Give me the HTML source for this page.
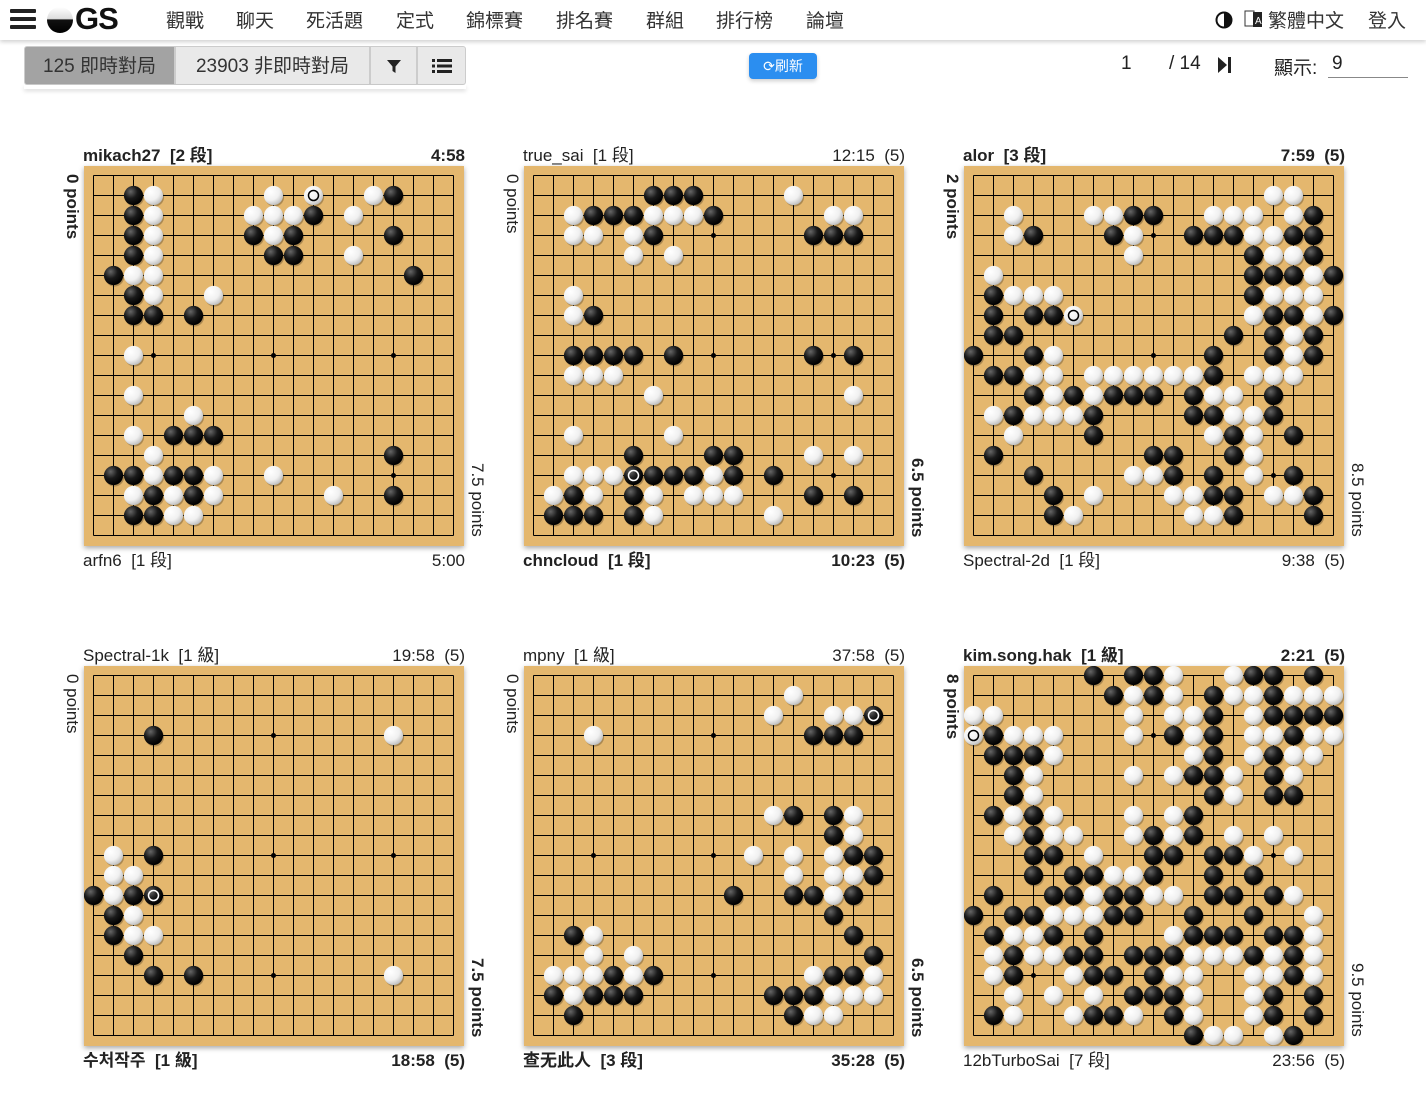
<!DOCTYPE html>
<html><head><meta charset="utf-8">
<style>
*{margin:0;padding:0;box-sizing:border-box}
body{width:1426px;height:1110px;background:#fff;font-family:"Liberation Sans","Noto Sans CJK TC",sans-serif;color:#222;position:relative;overflow:hidden}
.abs{position:absolute;white-space:nowrap}
.nav{position:absolute;left:0;top:0;width:1426px;height:40px;background:#fff;box-shadow:0 2px 4px rgba(0,0,0,.18)}
.nv{position:absolute;top:6px;font-size:19px;color:#333}
.bg{position:absolute;top:46px;height:39px;font-size:19px;line-height:39px;border:1px solid #ccc;text-align:center;color:#333}
.lbl{position:absolute;font-size:17px;line-height:20px;height:20px;color:#222;white-space:nowrap}
.b{font-weight:bold}
.side{position:absolute;font-size:17px;line-height:20px;writing-mode:vertical-rl;white-space:nowrap;color:#222}
.board{position:absolute;width:380px;height:380px;box-shadow:0 2px 5px rgba(0,0,0,.35)}
</style></head><body>
<div class="nav">
  <div class="abs" style="left:10px;top:9px;width:26px;height:4px;background:#222;border-radius:1px"></div>
  <div class="abs" style="left:10px;top:17px;width:26px;height:4px;background:#222;border-radius:1px"></div>
  <div class="abs" style="left:10px;top:25px;width:26px;height:4px;background:#222;border-radius:1px"></div>
  <svg class="abs" style="left:46px;top:6px" width="28" height="28"><defs><linearGradient id="lg" x1="0" y1="0" x2="0" y2="1"><stop offset="0" stop-color="#fff"/><stop offset=".45" stop-color="#ddd"/><stop offset=".5" stop-color="#111"/><stop offset="1" stop-color="#000"/></linearGradient></defs><circle cx="14" cy="14" r="13" fill="url(#lg)"/></svg>
  <div class="abs" style="left:75px;top:1px;font-size:31px;font-weight:bold;color:#111;letter-spacing:-1px">GS</div>
  <div class="nv" style="left:166px">觀戰</div>
  <div class="nv" style="left:236px">聊天</div>
  <div class="nv" style="left:306px">死活題</div>
  <div class="nv" style="left:396px">定式</div>
  <div class="nv" style="left:466px">錦標賽</div>
  <div class="nv" style="left:556px">排名賽</div>
  <div class="nv" style="left:646px">群組</div>
  <div class="nv" style="left:716px">排行榜</div>
  <div class="nv" style="left:806px">論壇</div>
  <svg class="abs" style="left:1215px;top:11px" width="18" height="18"><circle cx="9" cy="9" r="7.5" fill="none" stroke="#111" stroke-width="2"/><path d="M9 1.5A7.5 7.5 0 0 1 9 16.5Z" fill="#111"/></svg>
  <svg class="abs" style="left:1244px;top:9px" width="20" height="20"><rect x="1" y="2" width="9" height="15" fill="#fff" stroke="#333"/><rect x="9" y="3" width="9" height="15" fill="#222"/><text x="11" y="15" font-size="10" fill="#fff" font-family="Liberation Sans">A</text></svg>
  <div class="nv" style="left:1268px">繁體中文</div>
  <div class="nv" style="left:1368px">登入</div>
</div>
<div class="bg" style="left:24px;width:151px;background:#a3a3a3;border-radius:3px 0 0 3px">125 即時對局</div>
<div class="bg" style="left:175px;width:195px;background:#e9e9e9">23903 非即時對局</div>
<div class="bg" style="left:370px;width:47px;background:#e9e9e9"><svg width="16" height="16" style="vertical-align:-2px"><path d="M1 2H15L9.5 8.5V15L6.5 13V8.5Z" fill="#222"/></svg></div>
<div class="bg" style="left:417px;width:49px;background:#e9e9e9;border-radius:0 3px 3px 0"><svg width="20" height="16" style="vertical-align:-2px"><g fill="#222"><rect x="0" y="1" width="3" height="3"/><rect x="5" y="1" width="15" height="3"/><rect x="0" y="6.5" width="3" height="3"/><rect x="5" y="6.5" width="15" height="3"/><rect x="0" y="12" width="3" height="3"/><rect x="5" y="12" width="15" height="3"/></g></svg></div>
<div class="abs" style="left:24px;top:85px;width:442px;height:4px;box-shadow:0 2px 4px rgba(0,0,0,.15)"></div>
<div class="abs" style="left:749px;top:53px;width:68px;height:26px;background:#2b8ef0;border-radius:4px;color:#fff;font-size:14px;line-height:26px;text-align:center;box-shadow:0 2px 4px rgba(0,0,0,.2)">⟳刷新</div>
<div class="abs" style="left:1121px;top:53px;font-size:19px">1</div>
<div class="abs" style="left:1169px;top:53px;font-size:19px">/ 14</div>
<svg class="abs" style="left:1218px;top:57px" width="13" height="16"><path d="M0 0L9 8L0 16Z" fill="#222"/><rect x="10" y="0" width="3" height="16" fill="#222"/></svg>
<div class="abs" style="left:1274px;top:53px;font-size:19px">顯示:</div>
<div class="abs" style="left:1332px;top:53px;font-size:19px">9</div>
<div class="abs" style="left:1328px;top:77px;width:80px;height:1px;background:#888"></div>

<div id="boards"></div>
<script>
var games=[
{x:84,y:166,tl:"mikach27",tr:"[2 段]",tt:"4:58",bl:"arfn6",br:"[1 段]",bt:"5:00",tb:true,lp:"0 points",rp:"7.5 points",
s:["1:b2 w3 w9 W11 w14 b15","2:b2 w3 w8 w9 w10 b11 w13","3:b2 w3 b8 w9 b10 b15","4:b2 w3 b9 b10 w13","5:b1 w2 w3 b16","6:b2 w3 w6","7:b2 b3 b5","9:w2","11:w2","12:w5","13:w2 b4 b5 b6","14:w3 b15","15:b1 b2 w3 b4 b5 w6 w9","16:w2 b3 w4 b5 w6 w12 b15","17:b2 b3 w4 w5"]},
{x:524,y:166,tl:"true_sai",tr:"[1 段]",tt:"12:15&nbsp;&nbsp;(5)",bl:"chncloud",br:"[1 段]",bt:"10:23&nbsp;&nbsp;(5)",tb:false,lp:"0 points",rp:"6.5 points",
s:["1:b6 b7 b8 w13","2:w2 b3 b4 b5 w6 w7 w8 b9 w15 w16","3:w2 w3 w5 b6 b14 b15 b16","4:w5 w7","6:w2","7:w2 b3","9:b2 b3 b4 b5 b7 b14 b16","10:w2 w3 w4","11:w6 w16","13:w2 w7","14:b5 b9 b10 w14 w16","15:w2 w3 w4 B5 b6 b7 b8 w9 b10 b12","16:w1 b2 w3 b5 w6 w8 w9 w10 b14 b16","17:b1 b2 b3 b5 w6 w12"]},
{x:964,y:166,tl:"alor",tr:"[3 段]",tt:"7:59&nbsp;&nbsp;(5)",bl:"Spectral-2d",br:"[1 段]",bt:"9:38&nbsp;&nbsp;(5)",tb:true,lp:"2 points",rp:"8.5 points",
s:["1:w15 w16","2:w2 w6 w7 b8 b9 w12 w13 w14 w16 b17","3:w2 b3 b7 w8 b11 b12 b13 w14 w15 b16 b17","4:w8 b14 w15 w16 b17","5:w1 b14 b15 b16 w17 b18","6:b1 w2 w3 w4 b14 w15 w16 w17","7:b1 b3 b4 W5 w14 b15 b16 w17 b18","8:b1 b2 b13 b15 w16 b17","9:b0 b3 w4 b12 b15 w16 b17","10:b1 b2 w3 w4 w6 w7 w8 w9 w10 w11 b12 w14 w15 w16","11:b3 w4 b5 w6 b7 b8 b9 b11 w12 w13 b15","12:w1 b2 w3 w4 w5 b6 b11 b12 w13 w14 b15","13:w2 b6 w12 b13 w14 b16","14:b1 b9 b10 b13 w14","15:b3 w8 w9 b10 b12 w14 b16","16:b4 w6 w10 w11 b12 b13 w15 w16 b17","17:b4 w5 w11 w12 b13 b17"]},
{x:84,y:666,tl:"Spectral-1k",tr:"[1 級]",tt:"19:58&nbsp;&nbsp;(5)",bl:"수처작주",br:"[1 級]",bt:"18:58&nbsp;&nbsp;(5)",tb:false,lp:"0 points",rp:"7.5 points",
s:["3:b3 w15","9:w1 b3","10:w1 w2","11:b0 w1 b2 B3","12:b1 w2","13:b1 w2 w3","14:b2","15:b3 b5 w15"]},
{x:524,y:666,tl:"mpny",tr:"[1 級]",tt:"37:58&nbsp;&nbsp;(5)",bl:"查无此人",br:"[3 段]",bt:"35:28&nbsp;&nbsp;(5)",tb:false,lp:"0 points",rp:"6.5 points",
s:["1:w13","2:w12 w15 w16 B17","3:w3 b14 b15 b16","7:w12 b13 b15 w16","8:b15 w16","9:w11 w13 w15 b16 b17","10:w13 w15 w16 b17","11:b10 b13 b14 w15 b16","12:b15","13:b2 w3 b16","14:w3 w5 b17","15:w1 w2 w3 b4 w5 b6 w14 b15 b16 w17","16:b1 w2 b3 b4 b5 b12 b13 b14 w15 w16 w17","17:b2 b13 w14 w15"]},
{x:964,y:666,tl:"kim.song.hak",tr:"[1 級]",tt:"2:21&nbsp;&nbsp;(5)",bl:"12bTurboSai",br:"[7 段]",bt:"23:56&nbsp;&nbsp;(5)",tb:true,lp:"8 points",rp:"9.5 points",
s:["0:b6 b8 b9 w10 w13 b14 b15 b17","1:b7 w8 b9 w10 b12 w13 w14 b15 w16 w17 w18","2:w0 w1 w8 w10 w11 b12 w14 b15 b16 b17 b18","3:W0 b1 w2 w3 w4 w8 b10 w11 b12 w14 w15 b16 w17 w18","4:b1 b2 b3 w4 w11 b12 w14 b15 w16 w17","5:b2 w3 w8 w10 b11 b12 w13 b15 w16","6:b2 w3 b12 w13 b15 b16","7:b1 w2 b3 w4 w8 w10 b11","8:w2 b3 w4 w5 w8 b9 w10 b11 w13 w15","9:b3 b4 w6 b9 b10 b12 b13 w14 w16","10:b3 b5 b6 w7 w8 b9 b12 b14","11:b1 b4 b5 w6 b7 b8 w9 w10 b12 b13 b15 w16","12:b0 b2 b3 w4 w5 w6 b7 b8 b11 b14 w17","13:b1 w2 w3 b4 b6 w10 b11 b12 b13 b15 b16 w17","14:w1 b2 w3 w4 b5 b6 b8 b9 b10 w11 w12 w13 b14 w15 b16 w17","15:w1 b2 w5 b6 b7 b9 w10 w11 w14 w15 b16 w17","16:w2 w4 w6 b8 b9 b10 w11 w14 b15 b17","17:b1 w2 w5 b6 b7 w8 b10 w11 w14 b15 b17","18:b11 w12 w13 w15 b16"]}
];
var h='';
games.forEach(function(g){
 var svg='<svg class="board" style="left:'+g.x+'px;top:'+g.y+'px" width="380" height="380">';
 svg+='<defs><radialGradient id="bk" cx=".35" cy=".3" r=".7"><stop offset="0" stop-color="#666"/><stop offset=".5" stop-color="#1a1a1a"/><stop offset="1" stop-color="#000"/></radialGradient><radialGradient id="wt" cx=".35" cy=".3" r=".75"><stop offset="0" stop-color="#fff"/><stop offset=".6" stop-color="#f0f0f0"/><stop offset="1" stop-color="#bcbcbc"/></radialGradient></defs>';
 svg+='<rect width="380" height="380" fill="#e4b76e"/>';
 var p='';
 for(var i=0;i<19;i++){var c=9.5+i*20;p+='M9.5 '+c+'H369.5M'+c+' 9.5V369.5';}
 svg+='<path d="'+p+'" stroke="#000" stroke-width="1"/>';
 [3,9,15].forEach(function(a){[3,9,15].forEach(function(b){svg+='<circle cx="'+(9.5+a*20)+'" cy="'+(9.5+b*20)+'" r="2.5" fill="#000"/>';});});
 g.s.forEach(function(row){
  var parts=row.split(':');var r=+parts[0];
  parts[1].split(' ').forEach(function(t){
   var col=t[0],cc=+t.slice(1);var x=9.5+cc*20,y=9.5+r*20;
   var blk=(col=='b'||col=='B');
   svg+='<circle cx="'+(x+1)+'" cy="'+(y+1.5)+'" r="9.6" fill="rgba(0,0,0,.25)"/>';
   svg+='<circle cx="'+x+'" cy="'+y+'" r="9.6" fill="url(#'+(blk?'bk':'wt')+')"/>';
   if(col=='B')svg+='<circle cx="'+x+'" cy="'+y+'" r="5" fill="none" stroke="#fff" stroke-width="1.5"/>';
   if(col=='W')svg+='<circle cx="'+x+'" cy="'+y+'" r="5" fill="none" stroke="#000" stroke-width="1.5"/>';
  });
 });
 svg+='</svg>';
 h+=svg;
 var tb=g.tb?' b':'',bb=g.tb?'':' b';
 h+='<div class="lbl'+tb+'" style="left:'+(g.x-1)+'px;top:'+(g.y-20)+'px">'+g.tl+'&nbsp;&nbsp;'+g.tr+'</div>';
 h+='<div class="lbl'+tb+'" style="right:'+(1426-g.x-381)+'px;top:'+(g.y-20)+'px">'+g.tt+'</div>';
 h+='<div class="lbl'+bb+'" style="left:'+(g.x-1)+'px;top:'+(g.y+385)+'px">'+g.bl+'&nbsp;&nbsp;'+g.br+'</div>';
 h+='<div class="lbl'+bb+'" style="right:'+(1426-g.x-381)+'px;top:'+(g.y+385)+'px">'+g.bt+'</div>';
 h+='<div class="side'+tb+'" style="left:'+(g.x-22)+'px;top:'+(g.y+8)+'px">'+g.lp+'</div>';
 h+='<div class="side'+bb+'" style="left:'+(g.x+383)+'px;bottom:'+(1110-g.y-371)+'px">'+g.rp+'</div>';
});
document.getElementById('boards').innerHTML=h;
</script>
</body></html>
